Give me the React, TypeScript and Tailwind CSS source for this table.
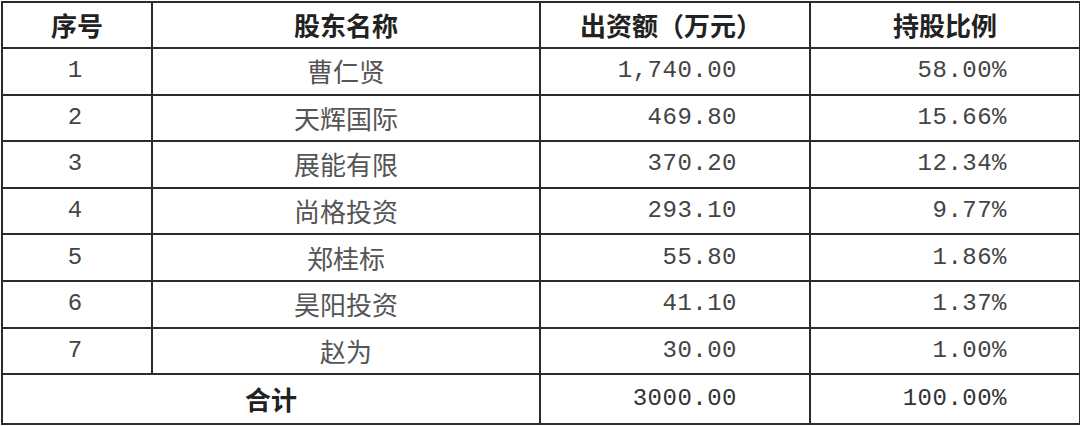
const rows = [
  { no: "1", name: "曹仁贤", amount: "1,740.00", ratio: "58.00%" },
  { no: "2", name: "天辉国际", amount: "469.80", ratio: "15.66%" },
  { no: "3", name: "展能有限", amount: "370.20", ratio: "12.34%" },
  { no: "4", name: "尚格投资", amount: "293.10", ratio: "9.77%" },
  { no: "5", name: "郑桂标", amount: "55.80", ratio: "1.86%" },
  { no: "6", name: "昊阳投资", amount: "41.10", ratio: "1.37%" },
  { no: "7", name: "赵为", amount: "30.00", ratio: "1.00%" },
]

const cjk = "font-['Noto_Sans_CJK_SC',sans-serif]"
const mono = "font-['Liberation_Mono','Noto_Sans_CJK_SC',monospace]"

export default function App() {
  return (
    <div className="w-[1080px] h-[426px] bg-white pl-px pt-px overflow-hidden">
      <table className="w-[1078px] border-collapse border-2 border-[#2b2b2b] table-fixed">
        <colgroup>
          <col className="w-[150px]" />
          <col className="w-[388px]" />
          <col className="w-[270px]" />
          <col className="w-[270px]" />
        </colgroup>
        <thead>
          <tr className={`h-[46px] text-[26px] font-semibold text-[#222] ${cjk}`}>
            <th className="border-2 border-[#2b2b2b] text-center font-semibold leading-none">序号</th>
            <th className="border-2 border-[#2b2b2b] text-center font-semibold leading-none">股东名称</th>
            <th className="border-2 border-[#2b2b2b] text-center font-semibold leading-none pr-2">出资额（万元）</th>
            <th className="border-2 border-[#2b2b2b] text-center font-semibold leading-none">持股比例</th>
          </tr>
        </thead>
        <tbody className="text-[#444]">
          {rows.map((r) => (
            <tr key={r.no} className="h-[46.6px]">
              <td className={`border-2 border-[#2b2b2b] text-center text-[24px] leading-none pr-1 ${mono}`}>{r.no}</td>
              <td className={`border-2 border-[#2b2b2b] text-center text-[26px] leading-none text-[#555] ${cjk}`}>{r.name}</td>
              <td className={`border-2 border-[#2b2b2b] text-right text-[24px] leading-none tracking-[0.5px] pr-[72px] ${mono}`}>{r.amount}</td>
              <td className={`border-2 border-[#2b2b2b] text-right text-[24px] leading-none tracking-[0.5px] pr-[72px] ${mono}`}>{r.ratio}</td>
            </tr>
          ))}
          <tr className="h-[50px]">
            <td colSpan={2} className={`border-2 border-[#2b2b2b] text-center text-[26px] leading-none font-semibold text-[#222] ${cjk}`}>合计</td>
            <td className={`border-2 border-[#2b2b2b] text-right text-[24px] leading-none tracking-[0.5px] pr-[72px] text-[#333] ${mono}`}>3000.00</td>
            <td className={`border-2 border-[#2b2b2b] text-right text-[24px] leading-none tracking-[0.5px] pr-[72px] text-[#333] ${mono}`}>100.00%</td>
          </tr>
        </tbody>
      </table>
    </div>
  )
}
